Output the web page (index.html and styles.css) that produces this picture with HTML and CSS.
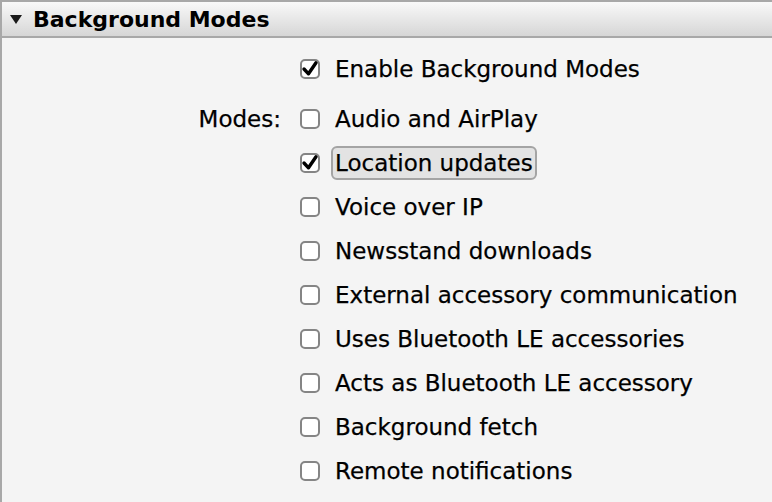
FILE: index.html
```html
<!DOCTYPE html>
<html lang="en">

<head>
    <meta charset="UTF-8">
    <title>Background Modes</title>
    <link rel="stylesheet" href="styles.css">
</head>

<body>
    <div class="pane">
        <div class="head">
            <span class="arrow"></span>
            <h1>Background Modes</h1>
        </div>

        <div class="modes">
            <div class="label"></div>
            <label class="row enable"><span class="box checked"><svg viewBox="0 0 20 20"><path d="M4 10 L8.5 14.8 L16 3.8"/></svg></span><span class="text">Enable Background Modes</span></label>

            <div class="label">Modes:</div>
            <label class="row"><span class="box"></span><span class="text">Audio and AirPlay</span></label>
            <div class="label"></div>
            <label class="row"><span class="box checked"><svg viewBox="0 0 20 20"><path d="M4 10 L8.5 14.8 L16 3.8"/></svg></span><span class="text focus">Location updates</span></label>
            <div class="label"></div>
            <label class="row"><span class="box"></span><span class="text">Voice over IP</span></label>
            <div class="label"></div>
            <label class="row"><span class="box"></span><span class="text">Newsstand downloads</span></label>
            <div class="label"></div>
            <label class="row"><span class="box"></span><span class="text">External accessory communication</span></label>
            <div class="label"></div>
            <label class="row"><span class="box"></span><span class="text">Uses Bluetooth LE accessories</span></label>
            <div class="label"></div>
            <label class="row"><span class="box"></span><span class="text">Acts as Bluetooth LE accessory</span></label>
            <div class="label"></div>
            <label class="row"><span class="box"></span><span class="text">Background fetch</span></label>
            <div class="label"></div>
            <label class="row"><span class="box"></span><span class="text">Remote notifications</span></label>
        </div>
    </div>
</body>

</html>
```

FILE: styles.css
```css
body {
    margin: 0;
    background-color: #f4f4f4;
    color: #000;
    font-family: "DejaVu Sans", "Noto Sans", sans-serif;
}

.pane {
    min-height: 502px;
    border-left: 2px solid #a8a8a8;
    box-sizing: border-box;
}

.head {
    display: flex;
    align-items: center;
    height: 34px;
    border-top: 2px solid #a8a8a8;
    border-bottom: 2px solid #a8a8a8;
    background: linear-gradient(#f9f9f9, #d6d6d6);
    padding-left: 8px;
}

.arrow {
    width: 0;
    height: 0;
    border-left: 6px solid transparent;
    border-right: 6px solid transparent;
    border-top: 9px solid #1a1a1a;
    margin-right: 11px;
    margin-top: 1px;
}

.head h1 {
    margin: 0;
    font-size: 22px;
    font-weight: bold;
}

.modes {
    display: grid;
    grid-template-columns: 279px auto;
    column-gap: 19px;
    row-gap: 22px;
    align-items: center;
    padding-top: 20px;
}

.label {
    text-align: right;
    font-size: 23px;
    line-height: 22px;
    -webkit-text-stroke: 0.25px #000;
}

.row {
    display: flex;
    align-items: center;
    height: 22px;
    font-size: 23px;
    -webkit-text-stroke: 0.25px #000;
}

.row.enable {
    margin-bottom: 6px;
}

.box {
    width: 16px;
    height: 16px;
    border: 2px solid #858585;
    border-radius: 5px;
    background: #fff;
    margin-right: 15px;
    position: relative;
    flex-shrink: 0;
}

.box svg {
    position: absolute;
    left: -2px;
    top: -2px;
    width: 20px;
    height: 20px;
}

.box svg path {
    fill: none;
    stroke: #000;
    stroke-width: 3.4;
    stroke-linecap: round;
    stroke-linejoin: round;
}

.text {
    padding: 0 2px;
    border: 2px solid transparent;
    margin-left: -4px;
}

.text.focus {
    background: #e3e3e3;
    border-color: #a4a4a4;
    border-radius: 6px;
    padding: 2px 2px;
}
```
